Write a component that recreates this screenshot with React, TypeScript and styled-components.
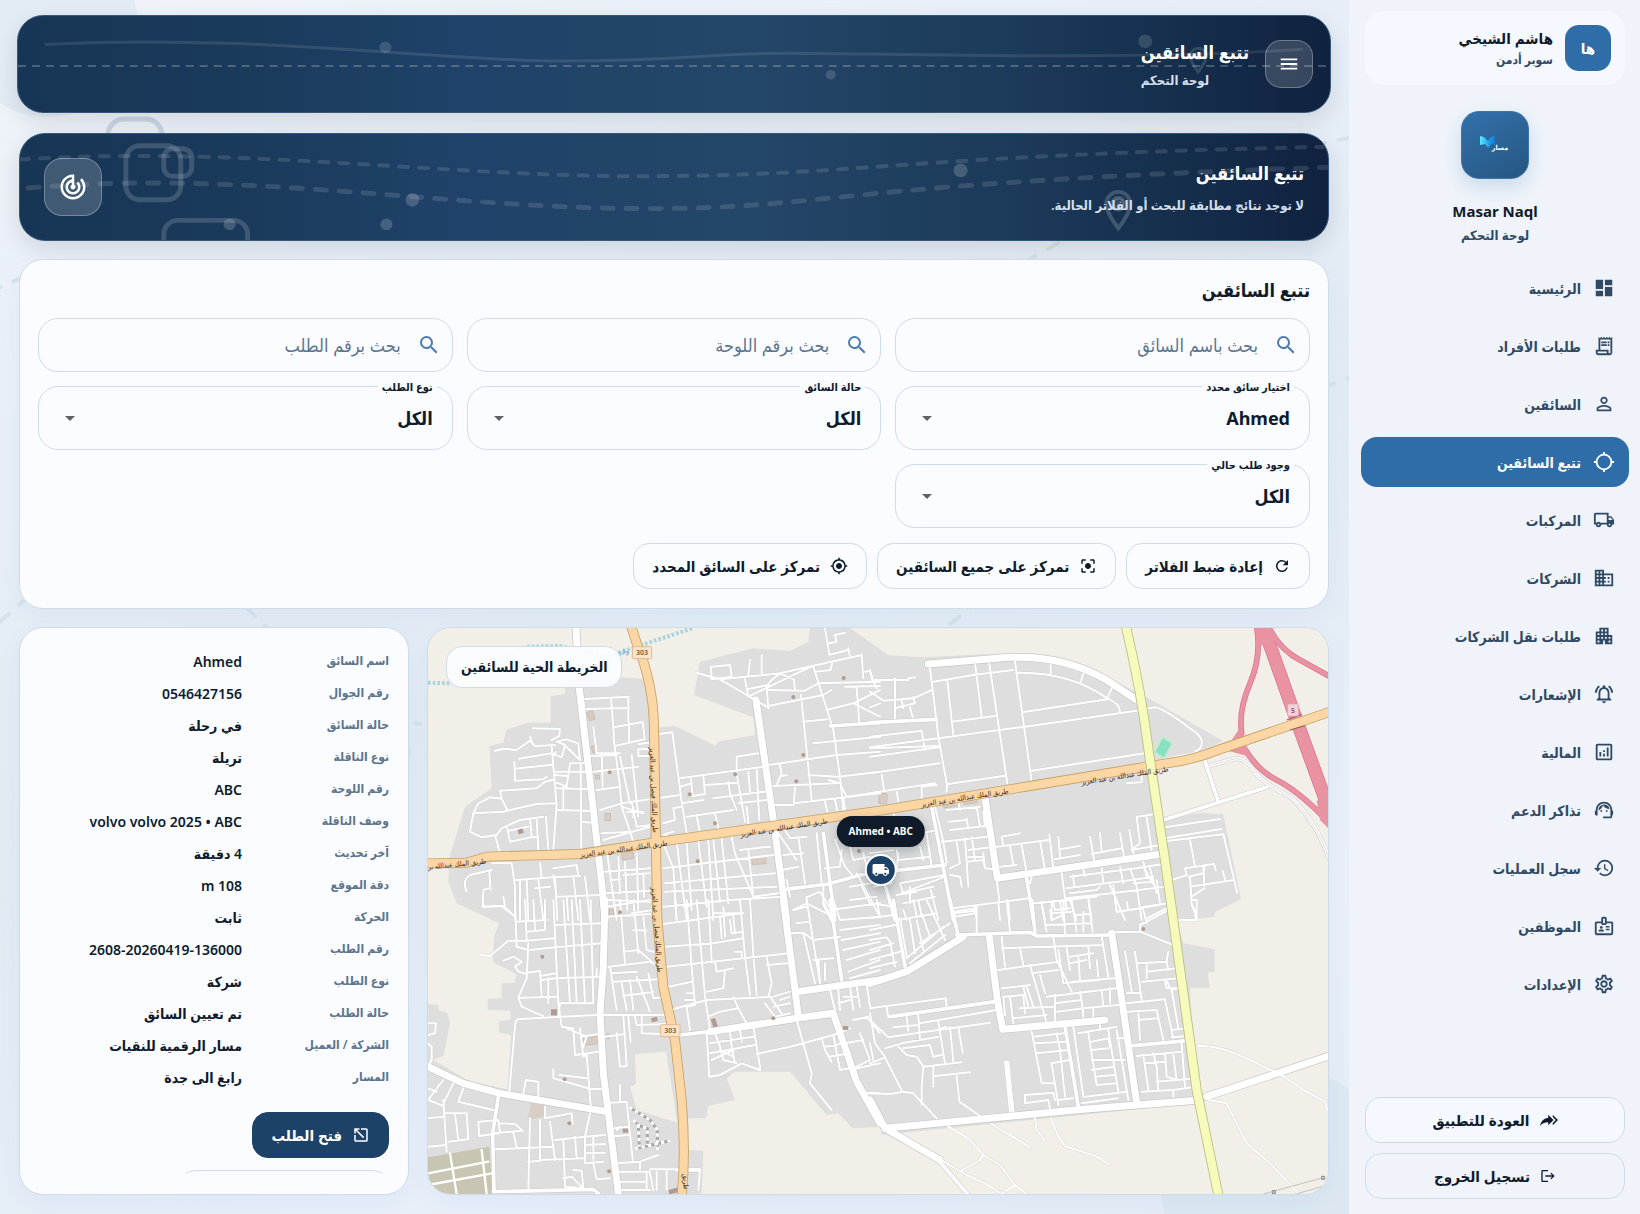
import React from 'react';
import styled, { createGlobalStyle, css } from 'styled-components';
import {
  MdApartment, MdArrowDropDown, MdBusiness, MdCenterFocusStrong, MdDashboard,
  MdGpsNotFixed, MdHistory, MdLocalShipping, MdLogout, MdMenu, MdMyLocation, MdOpenInNew,
  MdOutlineAnalytics, MdOutlineBadge, MdOutlineLocalShipping, MdOutlineNotificationsActive,
  MdOutlineReceiptLong, MdOutlineSettings, MdPersonOutline, MdRefresh, MdReplyAll, MdSearch,
  MdSupportAgent, MdTrackChanges,
} from 'react-icons/md';
import type { IconType } from 'react-icons';

const color = {
  ink: '#0f1b2d',
  nav: '#304a66',
  muted: '#5b7590',
  line: '#cfdbe9',
  blue: '#2f6da8',
  navy: '#1d4268',
  card: '#fbfcff',
  side: '#f0f4fa',
};

const GlobalStyle = createGlobalStyle`
  *, *::before, *::after { box-sizing: border-box; }
  body {
    margin: 0;
    font-family: "Noto Sans", "DejaVu Sans Condensed", "DejaVu Sans", sans-serif;
    color: ${color.ink};
    background: #e8eff7;
  }
  button, input, select { font: inherit; color: inherit; }
  h1, h2, p, dl, dd, ul { margin: 0; padding: 0; }
`;

/* ---------- shell ---------- */

const Shell = styled.div`
  display: grid;
  grid-template-columns: 291px minmax(0, 1fr);
  grid-template-rows: minmax(0, 1fr);
  height: 100vh;
`;

const Sidebar = styled.aside`
  display: flex;
  flex-direction: column;
  padding: 11px 11px 15px 12px;
  background: ${color.side};
`;

const Main = styled.main`
  position: relative;
  display: flex;
  flex-direction: column;
  gap: 18px;
  min-height: 0;
  padding: 15px 20px 19px 19px;
  background: linear-gradient(160deg, #f0f4f9 0%, #e9eff8 22%, #e1ebf4 52%, #e8eff9 80%, #e3ecf5 100%);
  overflow: hidden;
`;

const Backdrop = styled.svg`
  position: absolute;
  inset: 0;
  width: 100%;
  height: 100%;
`;

/* ---------- sidebar ---------- */

const UserCard = styled.div`
  display: flex;
  align-items: center;
  gap: 12px;
  margin: 0 4px;
  padding: 14px;
  border-radius: 20px;
  background: #f5f8fe;
`;

const Avatar = styled.div`
  display: grid;
  place-items: center;
  width: 46px;
  height: 46px;
  border-radius: 14px;
  background: ${color.blue};
  color: #fff;
  font-size: 15px;
  font-weight: 700;
`;

const UserName = styled.p`
  font-size: 15px;
  line-height: 24px;
  font-weight: 600;
`;

const UserRole = styled.p`
  font-size: 12px;
  line-height: 20px;
  font-weight: 600;
  color: ${color.nav};
`;

const Brand = styled.div`
  display: flex;
  flex-direction: column;
  align-items: center;
  padding: 26px 0 16px;
`;

const BrandMark = styled.div`
  display: grid;
  place-items: center;
  width: 68px;
  height: 68px;
  margin-bottom: 20px;
  border: 1px solid #3c75ab;
  border-radius: 18px;
  background: linear-gradient(150deg, #3371ab, #265681);
  box-shadow: 0 8px 20px rgba(47, 109, 168, 0.2);
`;

const BrandName = styled.p`
  font-size: 15px;
  line-height: 24px;
  font-weight: 700;
`;

const BrandSub = styled.p`
  font-size: 13px;
  line-height: 24px;
  font-weight: 600;
  color: ${color.nav};
`;

const NavList = styled.ul`
  display: flex;
  flex-direction: column;
  gap: 8px;
  list-style: none;
`;

const NavLink = styled.a<{ $active?: boolean }>`
  display: flex;
  align-items: center;
  gap: 12px;
  height: 50px;
  padding: 0 14px;
  border-radius: 16px;
  font-size: 14px;
  font-weight: 600;
  text-decoration: none;
  color: ${(p) => (p.$active ? '#fff' : color.nav)};
  background: ${(p) => (p.$active ? color.blue : 'transparent')};
  svg { width: 22px; height: 22px; }
`;

const SideActions = styled.div`
  display: flex;
  flex-direction: column;
  gap: 10px;
  margin: auto 4px 0;
`;

/* ---------- buttons ---------- */

const Button = styled.button<{ $primary?: boolean; $raised?: boolean }>`
  display: inline-flex;
  align-items: center;
  justify-content: center;
  gap: 10px;
  height: 46px;
  flex: none;
  padding: 0 18px;
  border: 1px solid ${color.line};
  border-radius: 16px;
  background: ${(p) => (p.$raised ? '#f5f8fe' : 'transparent')};
  font-size: 15px;
  font-weight: 700;
  white-space: nowrap;
  cursor: pointer;
  ${(p) => p.$primary && css`
    border-color: ${color.navy};
    background: ${color.navy};
    color: #fff;
  `}
`;

const Mirrored = styled.span`
  display: inline-flex;
  transform: scaleX(-1);
`;

/* ---------- banners ---------- */

const bannerSurface = css`
  position: relative;
  overflow: hidden;
  border: 1px solid #34577a;
  border-radius: 26px;
  background: linear-gradient(90deg, #173555 0%, #1b3b5c 18%, #20426a 34%, #244668 56%, #1c3a59 76%, #132b49 92%, #10223f 100%);
  color: #fff;
`;

const TopBar = styled.header`
  ${bannerSurface}
  flex: none;
  display: flex;
  align-items: center;
  gap: 16px;
  height: 98px;
  margin: 0 -2px 2px;
  padding: 0 17px;
  box-shadow: 0 8px 22px rgba(15, 27, 45, 0.12);
`;

const Hero = styled.section`
  ${bannerSurface}
  flex: none;
  display: flex;
  align-items: center;
  justify-content: space-between;
  height: 108px;
  padding: 0 24px;
  box-shadow: 0 8px 22px rgba(15, 27, 45, 0.12);
`;

const BannerArt = styled.svg`
  position: absolute;
  inset: 0;
  width: 100%;
  height: 100%;
  fill: none;
  stroke: #fff;
`;

const BannerText = styled.div<{ $end?: boolean }>`
  position: relative;
  text-align: ${(p) => (p.$end ? 'end' : 'start')};
`;

const BannerTitle = styled.h1`
  font-size: 18px;
  line-height: 32px;
  font-weight: 700;
`;

const BannerSub = styled.p<{ $spaced?: boolean }>`
  padding-top: ${(p) => (p.$spaced ? '4px' : '0')};
  font-size: 13px;
  line-height: 24px;
  font-weight: 600;
  color: #d3deeb;
`;

const GlassButton = styled.button`
  position: relative;
  display: grid;
  place-items: center;
  width: 48px;
  height: 48px;
  border: 1px solid rgba(255, 255, 255, 0.28);
  border-radius: 16px;
  background: rgba(255, 255, 255, 0.16);
  cursor: pointer;
`;

const GlassTile = styled.div`
  position: relative;
  display: grid;
  place-items: center;
  width: 58px;
  height: 58px;
  border: 1px solid rgba(255, 255, 255, 0.28);
  border-radius: 18px;
  background: rgba(255, 255, 255, 0.18);
`;

/* ---------- filters ---------- */

const Card = styled.section`
  position: relative;
  border: 1px solid ${color.line};
  border-radius: 24px;
  background: ${color.card};
  box-shadow: 0 8px 22px rgba(47, 109, 168, 0.05);
`;

const FilterCard = styled(Card)`
  flex: none;
  padding: 14px 18px 19px;
`;

const CardTitle = styled.h2`
  font-size: 18px;
  line-height: 32px;
  font-weight: 700;
`;

const FilterGrid = styled.div`
  display: grid;
  grid-template-columns: repeat(3, minmax(0, 1fr));
  gap: 14px;
  padding: 12px 0 15px;
`;

const SearchBox = styled.label`
  display: flex;
  align-items: center;
  gap: 16px;
  height: 54px;
  padding: 0 11px;
  border: 1px solid ${color.line};
  border-radius: 20px;
  color: #4a7bb0;
  svg { flex: none; }
`;

const SearchInput = styled.input`
  flex: 1;
  min-width: 0;
  padding: 0;
  border: 0;
  outline: 0;
  background: none;
  font-size: 18px;
  &::placeholder { color: ${color.muted}; opacity: 1; }
`;

const SelectBox = styled.div`
  position: relative;
  display: flex;
  align-items: center;
  height: 64px;
  border: 1px solid ${color.line};
  border-radius: 20px;
`;

const SelectLabel = styled.label`
  position: absolute;
  top: -10px;
  right: 15px;
  padding: 0 4px;
  background: ${color.card};
  font-size: 11px;
  line-height: 20px;
  font-weight: 700;
`;

const SelectInput = styled.select`
  width: 100%;
  height: 100%;
  padding: 0 19px;
  border: 0;
  outline: 0;
  background: none;
  appearance: none;
  font-size: 18px;
  font-weight: 700;
`;

const SelectArrow = styled(MdArrowDropDown)`
  position: absolute;
  left: 19px;
  color: #5f6368;
  pointer-events: none;
`;

const ButtonRow = styled.div`
  display: flex;
  flex-wrap: wrap;
  gap: 10px;
`;

/* ---------- lower row ---------- */

const Lower = styled.div`
  flex: 1;
  min-height: 0;
  display: grid;
  grid-template-columns: minmax(0, 902fr) minmax(0, 390fr);
  grid-template-rows: minmax(0, 1fr);
  gap: 18px;
`;

const MapCard = styled(Card)`
  overflow: hidden;
  background: #f2efe8;
`;

const MapCanvas = styled.svg`
  display: block;
  width: 100%;
  height: 100%;
`;

const MapChip = styled.h2`
  position: absolute;
  top: 18px;
  left: 18px;
  padding: 0 14px;
  border: 1px solid ${color.line};
  border-radius: 16px;
  background: rgba(251, 252, 255, 0.96);
  font-size: 14px;
  line-height: 40px;
  font-weight: 600;
`;

const Marker = styled.div`
  position: absolute;
  left: 50.3%;
  top: 33.2%;
  display: flex;
  flex-direction: column;
  align-items: center;
  gap: 7px;
  transform: translateX(-50%);
`;

const MarkerLabel = styled.span`
  padding: 0 12px;
  border-radius: 16px;
  background: #0f1b28;
  color: #fff;
  font-size: 10px;
  line-height: 31px;
  font-weight: 700;
  white-space: nowrap;
  box-shadow: 0 4px 12px rgba(15, 27, 45, 0.25);
`;

const MarkerPin = styled.span`
  display: grid;
  place-items: center;
  width: 32px;
  height: 32px;
  border: 2px solid #fff;
  border-radius: 50%;
  background: ${color.navy};
  color: #fff;
  box-shadow: 0 6px 12px rgba(15, 27, 45, 0.25);
`;

const DetailsCard = styled(Card)`
  display: flex;
  padding: 18px 19px 20px;
`;

const DetailsScroll = styled.div`
  flex: 1;
  min-width: 0;
  overflow: hidden;
`;

const DetailRow = styled.div`
  display: grid;
  grid-template-columns: 131px minmax(0, 1fr);
  gap: 16px;
  height: 32px;
  align-items: start;
`;

const DetailLabel = styled.dt`
  font-size: 12px;
  line-height: 30px;
  font-weight: 600;
  color: ${color.muted};
  white-space: nowrap;
`;

const DetailValue = styled.dd`
  font-size: 14px;
  line-height: 32px;
  font-weight: 600;
  white-space: nowrap;
`;

const DetailActions = styled.div`
  display: flex;
  flex-direction: column;
  align-items: flex-start;
  gap: 12px;
  padding-top: 18px;
`;

const WideButton = styled(Button)`
  min-width: 210px;
`;

/* ---------- data ---------- */

const navItems: { label: string; icon: IconType; active?: boolean }[] = [
  { label: 'الرئيسية', icon: MdDashboard },
  { label: 'طلبات الأفراد', icon: MdOutlineReceiptLong },
  { label: 'السائقين', icon: MdPersonOutline },
  { label: 'تتبع السائقين', icon: MdGpsNotFixed, active: true },
  { label: 'المركبات', icon: MdOutlineLocalShipping },
  { label: 'الشركات', icon: MdBusiness },
  { label: 'طلبات نقل الشركات', icon: MdApartment },
  { label: 'الإشعارات', icon: MdOutlineNotificationsActive },
  { label: 'المالية', icon: MdOutlineAnalytics },
  { label: 'تذاكر الدعم', icon: MdSupportAgent },
  { label: 'سجل العمليات', icon: MdHistory },
  { label: 'الموظفين', icon: MdOutlineBadge },
  { label: 'الإعدادات', icon: MdOutlineSettings },
];

const searches = ['بحث باسم السائق', 'بحث برقم اللوحة', 'بحث برقم الطلب'];

const selects = [
  { id: 'driver', label: 'اختيار سائق محدد', value: 'Ahmed' },
  { id: 'state', label: 'حالة السائق', value: 'الكل' },
  { id: 'kind', label: 'نوع الطلب', value: 'الكل' },
  { id: 'current', label: 'وجود طلب حالي', value: 'الكل' },
];

const details: [string, string][] = [
  ['اسم السائق', 'Ahmed'],
  ['رقم الجوال', '0546427156'],
  ['حالة السائق', 'في رحلة'],
  ['نوع الناقلة', 'تريلة'],
  ['رقم اللوحة', 'ABC'],
  ['وصف الناقلة', 'volvo volvo 2025 • ABC'],
  ['آخر تحديث', '4 دقيقة'],
  ['دقة الموقع', '108 m'],
  ['الحركة', 'ثابت'],
  ['رقم الطلب', '2608-20260419-136000'],
  ['نوع الطلب', 'شركة'],
  ['حالة الطلب', 'تم تعيين السائق'],
  ['الشركة / العميل', 'مسار الرقمية للنقيات'],
  ['المسار', 'رابغ الى جدة'],
];

/* ---------- map drawing: four quadrants share one road style ---------- */

type Quadrant = { x: number; y: number; minor: string; mid: string; major: string };

const quadrants: Quadrant[] = [
  {
    x: 0,
    y: 0,
    minor:
      'M495 237L625 230V305M490 267L627 264M573 234L582 350M582 322L668 306L674 358L584 378M627 308V366M580 350L600 500M655 388H705M655 388V408H700M655 372L690 368' +
      'M338 325L420 327L418 348L395 360M224 393L250 386L290 390L330 362L345 378L405 375M330 350L338 370M297 416L395 400L425 412L435 375L410 365L440 358L475 370L480 420L430 372M283 425L285 482L370 478L380 470M285 446L395 434M395 378L410 560M400 405L408 396M450 430H495M450 430L440 500L410 488M405 465L440 468M405 455H505' +
      'M240 512L350 505L375 485L405 478M240 512L245 536L210 532L175 550L160 580L150 635L185 652L230 645L245 625L300 600L370 590M160 580L250 575L350 552L410 550M245 536L262 570M262 625L270 665L335 652L330 595M265 632L325 620M350 595L355 690M378 590L385 690M410 550L400 690M225 645L240 700M410 505L515 508M410 570L518 573M430 500V568M482 430L484 690M484 605L520 608M330 652H355' +
      'M520 320L530 400L600 400M515 408L590 405M520 455L545 452L655 440M545 400L548 500M530 510L600 500M600 500L605 560L640 665M540 570L605 550L780 525M600 410L630 550M635 405L655 590M605 560L670 580M620 575H668M640 560V592M550 660L690 620M545 640L640 635M635 545L650 620L720 612' +
      'M718 342L757 337L785 545L800 640M780 475L1030 440M812 470L818 528L855 522L850 468M780 500L815 490M855 495L950 488M950 415V460L975 605M950 410L1015 400M985 455L990 515M1010 450L1018 600M785 550L850 540M880 535L1035 515M925 485L930 520L950 570M955 550L1040 540M730 610L765 600L760 565L785 560M800 590L940 570M830 585L840 640M885 580L895 625M980 560L985 610M730 645L760 635M740 640V650' +
      'M873 140L930 135L935 170L875 178ZM985 165L990 120M1025 105V160M828 158L900 178L1040 260M900 178L1080 160L1325 105L1330 175M975 178L985 230L1130 160L1175 140M985 207L1045 195M1045 210L1155 212L1195 190L1380 185M1045 265L1040 200Q1050 180 1080 160L1122 178L1125 212M1045 258L1210 225L1235 210M1180 140L1240 330L1260 470L1270 570M1185 155L1232 150L1237 125M1215 24L1228 104L1285 90M1228 70L1250 65L1245 45L1275 38M1285 85L1290 110M1220 270L1300 250L1380 210M1310 205L1318 310M1275 200L1380 198M1300 250L1380 290M1335 155L1350 152L1358 185M1150 305L1222 298M1143 225L1175 540M1045 435L1250 405L1380 395M1180 370L1380 350M1165 465L1255 470L1380 455M1060 498L1250 490M1080 435L1085 460L1070 495M1085 468L1100 466M1125 500L1122 550L1380 520M1225 480L1260 490L1280 530L1380 515M1215 545L1222 575M1245 540L1252 572M1270 535L1275 568M1120 555H1060M1210 640' +
      'M140 815Q125 780 150 765L215 750M208 755L212 810M190 810L205 805M190 815L188 860L250 858L285 890M250 830L255 860M215 728L275 730L285 800V900M288 780L400 772L480 768M300 778V900M320 776L325 900M355 780L370 900M345 805L390 800M400 765L410 830L545 825M360 728L365 772M400 745L470 735L475 768M440 830L445 900M460 770L475 900M495 770L510 900M405 770L412 900' +
      'M560 690L580 830L590 900M575 780L600 778M595 710L600 820M615 725L622 870M560 820L690 812M555 755L690 745M610 765L690 760M650 700L655 870M670 760L672 830M635 880L700 870M560 840L690 845' +
      'M730 670L760 745L770 900M730 745L1060 705M735 790L1065 760M735 815L1070 800M730 860L930 840L1090 830M770 665L780 745L800 900M800 670L815 870M835 665L860 860M865 660L880 900M880 660L900 845M905 655L925 850M935 650L945 700L1000 830M960 690L1050 680M985 690L1000 830L1075 820M735 650L800 660M1095 630L1110 655L1160 650M1075 640L1130 720M1090 705L1150 700M1135 650L1155 790M1190 640L1205 790M1085 750L1135 740M1100 780L1110 830' +
      'M1120 870L1160 850L1220 880M1165 830L1200 815L1240 880M1160 830V850M1230 870L1380 850M1245 660L1275 740L1300 770M1215 745L1260 740L1265 690M1310 760L1380 890M1290 800L1380 785M1290 840L1370 830M1325 800L1350 850M1290 680L1300 720L1350 710M1330 700L1340 740M1210 800V850',
    mid: 'M480 205L490 260M1230 318L1380 308M1095 808L1225 792L1320 765L1380 760M1210 640L1245 900M1210 850L1235 900',
    major: 'M468 24L478 205L545 790L555 900M1008 240L1060 600L1100 900',
  },
  {
    x: 1350,
    y: 0,
    minor:
      'M180 145L205 350L232 500M190 185L310 165L430 150M316 135L335 290M358 132L412 490M435 125L485 485M232 182L250 345M245 305L375 288M0 382L205 355L465 320L800 272L855 262M438 158Q600 155 712 235Q750 250 750 275M457 277L712 238M542 135V165M640 162L630 190M725 205L712 235M485 452L825 400M230 493L405 467M0 350L155 332L165 390M0 385L205 378M0 410L210 382M0 460L210 430M35 465L42 510M0 520L195 490M80 515L85 545M155 500V540M115 175L135 172M75 175V295M15 180H115M0 215L40 242L130 235L185 210M0 150L10 185L20 205M0 262L30 250M75 265L135 250M95 240L100 265M120 262L128 292M130 230L135 250M155 500L200 495M230 515V500' +
      'M855 262Q880 265 960 325Q1010 355 990 385L970 400L880 418M880 600L1185 500M770 490L815 487V465M885 622L1050 597M885 655L1055 627M890 663L1060 643L1102 820M960 660L975 740M905 780L950 765L945 745L1032 732L1038 752M955 770L1000 760L1005 735M960 800L1090 780M1058 752L1065 778M960 770L965 850L980 900M1000 740L1003 798M965 830L1003 805M980 840H965' +
      'M195 560L220 665L230 730M230 570L330 560M235 605L290 600M240 630L345 618M265 545L270 570M290 595L295 625M320 560L330 620M340 575L345 620M215 665L350 650M260 665L270 730L240 745M285 655L295 800M305 650L315 720M240 765L270 770L275 800M290 725L340 720L345 745L370 748M295 690L375 680M295 712L340 710M340 700L345 745' +
      'M380 680L535 660M395 650L450 640M395 655L400 675M420 678L430 735M455 675L470 760M510 662L525 750M538 645L550 745M390 740L440 735M565 650L570 710M570 688L630 677M555 718L630 705M660 650L672 720M690 640L695 695M665 702L755 685M750 640L762 710M778 630L790 700M800 590L810 670L785 690M830 592L845 690M802 590L852 583M785 690L870 675' +
      'M480 790L485 770M575 760L590 870M600 770L800 745L880 732M590 805L785 780M610 765L612 800M640 750L645 768M695 745L700 790M600 820L680 810L690 800M585 835L680 825L885 800M730 795L740 875L820 865M750 740L760 790M780 745L800 800L815 900M785 780L850 770M820 725L830 770M790 790L850 785M820 740L855 800M840 745L860 820M860 780L870 850M495 850L680 830M515 850L525 900M550 850L555 870L600 865M570 845L580 900M600 840L620 900M655 830L665 900M540 870L545 900M820 860L895 850M830 895L895 862M720 795L765 900' +
      'M380 780L388 840M250 865L475 835M385 845L390 900M415 845L420 900M315 860L320 900M255 880L315 872M80 690L85 720L180 710M90 790L225 765M90 790L100 820L190 800M95 820L225 770M100 850L195 830M145 840L155 890M120 850V800M180 800L205 900M80 750L85 700M150 680L160 720M170 640L185 740M0 700L70 690M10 800L65 790M0 850L75 860M80 825L140 815M100 870L110 900M70 575L72 590M155 640L190 632',
    mid: 'M0 308L200 298M1005 425L1045 545M880 600L1190 502M185 560L250 900M0 760L225 735M30 740L75 900M1015 438L1080 420Q1120 405 1145 445T1260 530Q1330 590 1380 720M470 775L490 900',
    major: 'M175 132L420 112Q580 105 710 180L800 240M345 535L382 775L875 702',
  },
  {
    x: 0,
    y: 840,
    minor:
      'M188 0L190 20L245 18L280 45M285 0L290 140L325 150M315 0L320 120M340 0L345 90M375 0V90L320 95M288 65L380 60M265 122L320 122L405 115M180 165L210 168L265 122M250 182L280 170L305 185L285 200L295 215L320 222M325 130L320 235L295 293L305 320L345 338L370 348M400 0L415 310L425 380L460 385L465 465L535 455M320 218L360 213L365 290M365 240L410 235M385 235V310M300 293L410 290M360 228L410 220M330 150L405 142L545 130M405 75L545 70M430 0L450 310M455 0L470 310M480 0L495 310M512 0L520 310M420 310H520M415 235L540 230M530 205V230M415 348L420 310M440 385L500 410L490 440' +
      'M295 358L420 350L535 345M295 358Q285 360 285 380L268 572M485 410L535 402M480 385L490 470L500 465L512 615M470 465L535 455M400 508V535L505 565M418 525L500 535M505 567H545M310 580L318 540L355 545V590M24 370H48L45 400L24 405M24 430L35 440V480L24 500M100 550L70 610M70 540L24 600M24 565L50 575M130 565L115 605L220 630M24 600L70 618M70 600L80 755M72 640L140 640L145 718L85 725M105 640L115 720M24 655L70 650M24 740L80 735M175 665L235 660L240 700L178 708ZM235 670L285 672L308 692L220 700M280 698L290 740M360 660V780M330 655L325 870M375 620V655L455 640L458 672M360 780L490 775M325 785L360 782M225 748L400 740M390 665L405 780M405 720L495 710L555 705M430 720L435 860M510 640L495 710V790L550 785M465 710L470 775M430 835L455 830L490 865M460 810L485 812L490 865M435 860L490 865M520 790L530 838L570 835M495 735L555 732M495 760L555 758M520 710V780' +
      'M560 20L690 0M560 50L690 42M600 0L615 190M640 0L655 160M565 200L655 190L690 185L720 200M575 220L650 215M580 245L720 238M570 200L590 330M605 250L620 330M630 240L640 330M650 230L690 335M685 220L700 295L740 290M610 288L700 275M610 155L655 150L695 185M640 90L680 92M670 50L680 150L700 155M545 345L740 345M555 410L615 402M590 400L600 500L620 498L610 345M625 350L632 425M645 350L650 375L740 372M665 345V400L720 402M570 608L620 605L638 780M585 685L625 680M585 708L630 705M600 555V605M585 790L660 785L715 765M660 785V808M590 815H690M600 845H680M605 870H690M680 815V870M590 690L600 680' +
      'M730 72L970 40M735 140L880 130L970 115M740 200L1035 168L1105 160M765 0L770 60M800 0L815 200L825 315L800 320M830 0L855 290L870 390M865 0L875 180M790 20L815 15M745 260L815 245M800 280H820M795 300H825M750 330L860 300L1060 290M800 320L810 390M960 0L975 170L990 285M990 0L1000 165L1010 285M900 50L905 115M880 40H960M940 50L945 100M930 60L935 100L970 95M945 155H965V170M910 20L915 110M1040 170L1055 250L1045 290M1040 195L1105 190M885 185L890 215L940 205M860 275L910 265L915 210M865 350L900 335L955 325L985 380M940 290L955 325M1000 380L1020 500L1020 510L965 490L900 525L868 530L860 400M870 430L1000 410M870 460L1005 435M885 400L900 440L910 480L950 490M930 395L935 440L945 490M900 450L940 470M960 390L965 425M875 480L940 450M1010 462L1110 440L1240 405M1130 360L1175 520L1170 550L1235 630M1035 310L1065 350L1110 340M1050 290L1085 340M1080 300L1110 290M1060 320L1110 310M1110 275L1060 290' +
      'M1130 70L1165 65M1115 100L1150 98L1180 120L1260 110M1160 0L1200 250M1120 30L1160 20M1180 180L1240 175M1215 190V240M1195 180L1200 250M1150 100L1185 250M1240 0L1260 60L1380 50M1260 90L1380 75M1265 120L1380 100M1270 150L1380 125M1280 180L1380 150M1285 215L1380 180M1290 235L1380 210M1230 270L1245 330M1255 270L1260 330M1290 260L1300 330M1310 260L1320 320M1340 250L1350 320M1255 310L1290 300M1270 290L1310 290M1240 405L1290 385M1205 415L1215 450L1235 485M1240 405L1260 510L1310 500M1215 440L1330 420M1225 470L1290 460M1320 400L1350 480L1310 500M1340 350L1380 400M1300 360L1345 350M1290 510L1380 490M1340 580H1380M690 820L700 870M710 815V870M740 810V870M690 808H840L835 870',
    mid: 'M235 590L218 700L222 870M220 875L520 868L535 880M780 405L870 395M1230 0L1265 240M770 810H840',
    major: 'M555 0L550 200L540 340L550 520L565 640L595 880M24 500L130 550L240 580L560 635M1090 0L1125 270L1135 350M1130 275L1380 240M870 395L1130 355L1240 340L1310 545L1380 670',
  },
  {
    x: 1350,
    y: 840,
    minor:
      'M0 55L70 45M0 90L75 75M0 120L50 112L60 125L75 200M0 150L70 130M0 180L90 155M0 205L80 185M85 60L200 40M90 55L110 170M120 60L135 160M140 60L160 150M155 40L180 110M170 0L225 120M110 175L220 80M120 190L225 105M150 130L240 70M20 0L30 50M130 0L140 50M250 35L320 25M320 20V100M410 0L420 95M255 50L315 40M490 10L605 0M515 10L530 95M545 10V60L580 45M580 0L585 100M605 0L620 95M550 40L605 35M525 75L665 70M640 35V95M655 0L668 95M615 45L660 42M735 0L740 35L870 15M820 30L830 70M770 5L775 30M810 95V75L895 30M725 97L810 95L910 135' +
      'M395 110L405 200M395 145L700 135M450 145L460 195M385 210L565 185M550 110L560 180L605 275M480 195L530 370M395 265L480 255M485 220L565 210M510 225L525 280M565 150L580 250L690 240M590 145L600 210M600 170L670 160M600 190L650 180M625 170L630 240M655 140L660 205M680 180L685 230M695 110L715 230M605 245L735 235M530 290L740 265M555 285V360M555 310L635 300L640 350M630 275L640 340M695 270L700 320M720 265V310M640 325L745 315M450 325L550 320M400 290L460 285L465 340M420 290L430 370M460 260L475 320M470 260L490 320M430 355L530 345M560 335L640 325M670 325V350M400 290L405 345' +
      'M765 155L785 275M795 155L815 300M805 190L890 185L895 155M830 190V235M830 215L920 205M815 245L925 235M890 185L895 210M770 280L810 278M770 310L885 298M885 240L890 265L925 265M885 300L910 415M770 335L860 330M805 335L810 420M860 330L880 420M905 270L925 385M890 240L900 265M805 360L865 355M905 390L950 385M905 412L955 408M935 430L945 560M800 468L935 455M820 465L835 570M850 460L860 500L865 570M885 460L890 530L920 540L910 465M825 490L885 485M860 545L980 535M815 575L910 570L975 560M910 570V590M905 270L925 265' +
      'M485 395L515 550H550M490 410L580 400M495 430L585 425M500 460L595 450M545 490L600 480M545 490L565 615M560 400L570 450L585 590M465 585L550 578L555 600M465 585V610L535 600L540 625M565 600L610 595M610 380L640 590M625 400L740 380M655 400L680 555M665 425L715 415L720 440M665 450L715 445M665 510L730 500M675 530L735 525M680 555L740 550M690 375V390M715 390L745 575M740 390L775 600M645 590L770 575M665 480H765M740 415H760M635 610L745 595' +
      'M0 325L228 295L230 325M50 320L55 352L375 305M145 345L150 420M70 382L145 375M110 350L115 392M150 370L380 330M0 360L55 412L205 390L360 368M205 365L225 490M240 380L250 485M265 382L278 458M215 385L230 380M45 445L95 430L205 410M85 440L110 465L140 470L160 500L155 560V615M100 445L180 435L190 470L215 465M160 500L275 487M190 500V560M195 528L300 517M260 528L268 605L330 648M0 490L45 472L97 575M0 340L10 400L15 430L45 470M0 430L10 480M0 580L60 582L100 575L130 580L200 655M405 485H415L430 635M405 485L420 635' +
      'M235 680L295 715L340 765L330 780L275 812M340 765L390 795L435 855L395 882M435 855L470 882M365 672L480 742M495 655L500 690L525 722M543 655L565 710L585 738L680 770L718 793M205 775L290 825L345 850L395 882M985 438Q1050 435 1130 475L1240 528L1300 570L1365 605L1372 630M1015 600L1070 610L1090 650L1130 730L1200 790L1285 880M900 60H980V40L965 15M980 0V40',
    mid: 'M240 0L265 110M70 0L105 200M485 0L495 100M260 105L480 97L500 108L720 105M790 437L955 422M585 380L625 620M205 780L295 885M410 490L428 630M60 350L375 305',
    major: 'M0 250L110 215L280 110M358 110L382 300L398 388L705 360M725 100L760 330L800 610M0 600L45 685L210 780M45 685L640 628L990 600M1010 590L1380 467',
  },
];

const urban =
  'M435 170V222L392 228V308H325L258 330L250 368L208 378L215 505L135 560L90 705L85 785L110 850L237 910L222 950L218 1025L288 1062L285 1088L245 1090V1135L203 1137V1170L272 1172V1200L237 1202V1238L273 1245L262 1408L150 1385L40 1320L70 1308L90 1210L82 1178L55 1170V1155L24 1152V1722H845L850 1592L805 1590V1495H858L865 1458L945 1440L920 1375L945 1355H1110L1220 1485L1255 1480L1298 1525L1380 1520L1385 1545L2330 1450L2310 1103H2370L2363 1057L2384 1055V988L2290 970L2270 900L2345 895L2383 890L2385 875L2463 838L2410 582L2335 580L2230 600L2210 430L2330 410L2408 362L2180 232L2050 165L1910 115L1780 98L1510 112L1405 106L1290 24H1170L1165 65L1110 93L1000 85L840 125L822 225L1000 292L1005 345L893 365L888 378L765 318L715 322L700 180L595 170Z';

const buildings: [number, number, number, number, number][] = [
  [500, 278, 18, 26, -20], [513, 380, 10, 20, -20], [555, 580, 16, 22, 0], [605, 700, 34, 20, -8],
  [995, 712, 42, 22, -4], [1378, 520, 24, 30, 4], [1570, 548, 44, 16, -8], [1630, 540, 40, 14, -8],
  [487, 1255, 46, 22, -8], [526, 465, 12, 12, 0], [568, 868, 12, 18, 0], [560, 1242, 8, 14, 0],
];

const landmarks: [number, number][] = [
  [1271, 174], [1120, 231], [1150, 405], [946, 463], [1129, 484], [809, 523], [885, 610], [1317, 693],
  [833, 724], [569, 457], [367, 1010], [600, 877], [434, 1378], [448, 1510], [1060, 1195], [567, 1654], [2170, 927],
];

const blocks: [number, number, number, number, number][] = [
  [292, 630, 16, 14, -20], [393, 1168, 18, 18, 0], [693, 1195, 18, 12, -15], [872, 1198, 14, 26, -18],
  [1269, 1218, 16, 12, 0], [608, 1526, 16, 12, 0], [745, 1710, 28, 14, -15],
];

const HORIZONTAL_ROAD = 'طريق الملك عبدالله بن عبد العزيز';
const VERTICAL_ROAD = 'طريق الملك فيصل بن عبد العزيز';

const roadLabels = [
  { x: 612, y: 694, r: -8, text: HORIZONTAL_ROAD },
  { x: 1093, y: 630, r: -9, text: HORIZONTAL_ROAD },
  { x: 1635, y: 540, r: -9, text: HORIZONTAL_ROAD },
  { x: 2115, y: 474, r: -9, text: HORIZONTAL_ROAD },
  { x: 68, y: 744, r: -6, text: HORIZONTAL_ROAD },
  { x: 694, y: 510, r: 88, text: VERTICAL_ROAD },
  { x: 704, y: 930, r: 86, text: VERTICAL_ROAD },
];

function StreetMap() {
  return (
    <MapCanvas viewBox="24 24 2700 1698" preserveAspectRatio="xMidYMid slice" aria-hidden="true">
      <rect x="0" y="0" width="2760" height="1760" fill="#f2efe8" />
      <path d={urban} fill="#dedede" />
      <path d="M645 1303L738 1295L772 1508L650 1470L630 1400L648 1392Z" fill="#f2efe8" />
      <path d="M24 1612L208 1580L218 1722H24Z" fill="#c8c6b2" />
      <path d="M333 1448L378 1455L370 1490L322 1500Z" fill="#d8cec6" />
      <path d="M24 188L90 190L180 150L320 80L420 78L560 110L680 70L820 24" fill="none" stroke="#a9d5df" strokeWidth="12" strokeDasharray="8 6" />
      {buildings.map(([x, y, w, h, r]) => (
        <rect key={`${x}-${y}`} x={x} y={y} width={w} height={h} fill="#d8cbc2" stroke="#c4b3a7" strokeWidth="2" transform={`rotate(${r} ${x} ${y})`} />
      ))}
      <g fill="none" strokeLinecap="round" strokeLinejoin="round">
        {quadrants.map((q) => (
          <g key={`casing-${q.x}-${q.y}`} transform={`translate(${q.x} ${q.y})`} stroke="#c6c6c6">
            <path d={q.minor} strokeWidth="8" stroke="#d0d0d0" />
            <path d={q.mid} strokeWidth="14" />
            <path d={q.major} strokeWidth="25" />
          </g>
        ))}
        {quadrants.map((q) => (
          <g key={`road-${q.x}-${q.y}`} transform={`translate(${q.x} ${q.y})`} stroke="#fff">
            <path d={q.minor} strokeWidth="6" />
            <path d={q.mid} strokeWidth="11" />
            <path d={q.major} strokeWidth="21" />
          </g>
        ))}
        <path d="M24 1660L205 1625M24 1695L215 1660M90 1600L110 1722M185 1590L200 1722" stroke="#fff" strokeWidth="7" />
        <path d="M2365 438L2430 420Q2470 405 2495 445T2610 530Q2680 590 2730 720" stroke="#c6c6c6" strokeWidth="2" />
        <path d="M628 1462L690 1500L712 1530V1590M640 1500L655 1515L658 1580M650 1515L682 1525V1575M645 1586L750 1562" stroke="#a9a9a9" strokeWidth="9" strokeLinecap="butt" />
        <path d="M628 1462L690 1500L712 1530V1590M640 1500L655 1515L658 1580M650 1515L682 1525V1575M645 1586L750 1562" stroke="#fff" strokeWidth="9" strokeDasharray="10 10" strokeLinecap="butt" />
      </g>
      <g fill="#b09c90">
        {landmarks.map(([x, y]) => <circle key={`${x}-${y}`} cx={x} cy={y} r="6" />)}
        {blocks.map(([x, y, w, h, r]) => (
          <rect key={`${x}-${y}`} x={x} y={y} width={w} height={h} transform={`rotate(${r} ${x} ${y})`} />
        ))}
      </g>
      <g fill="none" strokeLinejoin="round">
        <g stroke="#dc6c8c">
          <path d="M2510 20Q2525 110 2490 190T2465 340L2430 385" strokeWidth="17" />
          <path d="M2545 20Q2580 90 2640 120L2740 175" strokeWidth="17" />
          <path d="M2430 385L2470 380Q2510 450 2570 480T2710 590" strokeWidth="17" />
          <path d="M2530 20L2640 330L2760 660" strokeWidth="40" />
        </g>
        <g stroke="#e892a2">
          <path d="M2510 20Q2525 110 2490 190T2465 340L2430 385" strokeWidth="13" />
          <path d="M2545 20Q2580 90 2640 120L2740 175" strokeWidth="13" />
          <path d="M2430 385L2470 380Q2510 450 2570 480T2710 590" strokeWidth="13" />
          <path d="M2530 20L2640 330L2760 660" strokeWidth="36" />
        </g>
        <path d="M2502 24H2550L2560 80L2520 75Z" fill="#e892a2" />
        <path d="M2462 320L2415 390L2490 410Z" fill="#e892a2" />
        <path d="M2690 540L2700 600L2740 640V560Z" fill="#e892a2" />
        <g stroke="#c3a165" strokeWidth="30">
          <path d="M634 20L650 70Q700 190 702 320L708 690L712 900L730 1100L765 1260L785 1440Q798 1600 785 1730" />
          <path d="M0 731L140 728L200 710L480 702L700 668L1380 572L1830 498L2240 430Q2320 420 2400 388L2740 272" />
        </g>
        <g stroke="#fcd6a4" strokeWidth="25">
          <path d="M634 20L650 70Q700 190 702 320L708 690L712 900L730 1100L765 1260L785 1440Q798 1600 785 1730" />
          <path d="M0 731L140 728L200 710L480 702L700 668L1380 572L1830 498L2240 430Q2320 420 2400 388L2740 272" />
        </g>
        <path d="M2118 20Q2165 220 2187 400L2235 720L2330 1410L2396 1730" stroke="#b8bd80" strokeWidth="30" />
        <path d="M2118 20Q2165 220 2187 400L2235 720L2330 1410L2396 1730" stroke="#f6fabb" strokeWidth="25" />
        <path d="M2600 300L2645 283M2610 330L2655 317" stroke="#8c5a55" strokeWidth="3" />
        <path d="M2530 1722L2710 1673M2600 1730L2740 1690" stroke="#aaa" strokeWidth="2" />
        <path d="M2557 1712h9v9h-9zM2705 1669h9v9h-9z" stroke="#888" strokeWidth="3" fill="#ccc" />
      </g>
      <path d="M2228 352L2256 370L2232 414L2205 396Z" fill="#88e0be" stroke="#aef0c8" strokeWidth="4" />
      <g fontFamily='"Noto Sans", "DejaVu Sans Condensed", "DejaVu Sans", sans-serif' textAnchor="middle">
        <g fill="#3a2c1e" fontSize="21">
          {roadLabels.map((l) => (
            <text key={`${l.x}-${l.y}`} x={l.x} y={l.y} transform={`rotate(${l.r} ${l.x} ${l.y})`}>{l.text}</text>
          ))}
          <text x="790" y="1685" transform="rotate(88 790 1685)">طريق</text>
        </g>
        <text x="590" y="108" fontSize="22" fill="#5b93c8" transform="rotate(-14 590 108)">وادي رابغ</text>
        <g fontSize="21" fontWeight="600">
          <g fill="#f8e4cc" stroke="#e0b98a" strokeWidth="3">
            <rect x="637" y="80" width="58" height="36" rx="3" />
            <rect x="722" y="1214" width="58" height="36" rx="3" />
          </g>
          <rect x="2603" y="252" width="32" height="36" rx="3" fill="#f3d3da" stroke="#e3a5b3" strokeWidth="2" />
          <text x="666" y="106" fill="#7c5c34">303</text>
          <text x="751" y="1240" fill="#7c5c34">303</text>
          <text x="2619" y="278" fill="#9c3f5c">5</text>
        </g>
      </g>
    </MapCanvas>
  );
}

/* ---------- decorative art ---------- */

function PageArt() {
  return (
    <Backdrop viewBox="0 0 1349 1214" preserveAspectRatio="none" aria-hidden="true" fill="none">
      <circle cx="48" cy="27" r="90" fill="#dde8f2" fillOpacity="0.7" />
      <circle cx="1276" cy="1180" r="116" fill="#d9e6ef" fillOpacity="0.7" />
      <rect x="108" y="119" width="54" height="56" rx="16" stroke="#c9d6e4" strokeWidth="5" />
      <g stroke="#d6e1ec" strokeWidth="4" strokeLinecap="round" strokeDasharray="12 14">
        <path d="M-10 292Q20 278 60 262M1025 262Q1180 170 1349 138M930 640Q1180 440 1349 378M0 622Q140 490 240 600T420 724" />
      </g>
      <circle cx="404" cy="752" r="7" fill="#d3dfeb" />
    </Backdrop>
  );
}

function TopBarArt() {
  return (
    <BannerArt viewBox="0 0 1314 98" preserveAspectRatio="none" aria-hidden="true">
      <path d="M27 29C240 18 420 46 543 46S690 38 770 38S1110 46 1287 34" strokeOpacity="0.1" strokeWidth="3" />
      <path d="M0 51H1314" strokeOpacity="0.22" strokeWidth="2" strokeDasharray="8 6" />
      <g fill="#fff" fillOpacity="0.14" stroke="none">
        <circle cx="368" cy="32" r="6" />
        <circle cx="814" cy="60" r="5" />
        <circle cx="1129" cy="26" r="7" />
      </g>
      <g strokeOpacity="0.14" strokeWidth="3">
        <path d="M1182 57Q1174 46 1174 41A8 8 0 0 1 1190 41Q1190 46 1182 57Z" />
        <circle cx="1182" cy="41" r="3" />
      </g>
    </BannerArt>
  );
}

function HeroArt() {
  return (
    <BannerArt viewBox="0 0 1310 108" preserveAspectRatio="none" aria-hidden="true">
      <g strokeLinecap="round" strokeOpacity="0.12">
        <path d="M0 26C220 12 420 43 620 43C840 43 880 22 1310 13" strokeWidth="4" strokeDasharray="9 11" />
        <path d="M8 55C230 36 420 76 630 76C810 76 820 50 1310 34" strokeWidth="5" strokeDasharray="11 13" />
      </g>
      <g strokeOpacity="0.16" strokeWidth="5">
        <rect x="106" y="12" width="55" height="55" rx="14" />
        <rect x="144" y="15" width="28" height="28" rx="9" />
        <rect x="144" y="88" width="84" height="60" rx="14" />
      </g>
      <g fill="#fff" fillOpacity="0.18" stroke="none">
        <circle cx="393" cy="67" r="7" />
        <circle cx="367" cy="92" r="6" />
        <circle cx="210" cy="92" r="6" />
        <circle cx="942" cy="37" r="7" />
      </g>
      <g strokeOpacity="0.18" strokeWidth="4">
        <path d="M1100 96Q1088 80 1088 71A12 12 0 0 1 1112 71Q1112 80 1100 96Z" />
        <circle cx="1100" cy="71" r="6" fill="#fff" fillOpacity="0.12" />
      </g>
    </BannerArt>
  );
}

function Logo() {
  return (
    <svg width="30" height="20" viewBox="0 0 30 20" role="img" aria-label="مسار">
      <defs>
        <linearGradient id="mark" x1="0" y1="0" x2="1" y2="0">
          <stop offset="0" stopColor="#5ce8fb" />
          <stop offset="0.6" stopColor="#1a9fee" />
          <stop offset="1" stopColor="#1676d8" />
        </linearGradient>
      </defs>
      <path d="M0 1L4 2L8 6L11 2L15 1V10L12 8L8 13L5 9L0 10Z" fill="url(#mark)" />
      <text x="20" y="15" fontSize="7" fontWeight="700" textAnchor="middle" fill="#fff">مسار</text>
    </svg>
  );
}

/* ---------- page ---------- */

export default function App() {
  return (
    <Shell dir="rtl" lang="ar">
      <GlobalStyle />
      <Sidebar>
        <UserCard>
          <Avatar>ها</Avatar>
          <div>
            <UserName>هاشم الشيخي</UserName>
            <UserRole>سوبر أدمن</UserRole>
          </div>
        </UserCard>
        <Brand>
          <BrandMark><Logo /></BrandMark>
          <BrandName>Masar Naql</BrandName>
          <BrandSub>لوحة التحكم</BrandSub>
        </Brand>
        <nav>
          <NavList>
            {navItems.map(({ label, icon: Icon, active }) => (
              <li key={label}>
                <NavLink href="#" $active={active} aria-current={active ? 'page' : undefined}>
                  <Icon />
                  {label}
                </NavLink>
              </li>
            ))}
          </NavList>
        </nav>
        <SideActions>
          <Button type="button" $raised><Mirrored><MdReplyAll size={18} /></Mirrored>العودة للتطبيق</Button>
          <Button type="button"><MdLogout size={16} />تسجيل الخروج</Button>
        </SideActions>
      </Sidebar>

      <Main>
        <PageArt />
        <TopBar>
          <TopBarArt />
          <GlassButton type="button" aria-label="القائمة"><MdMenu size={22} color="#fff" /></GlassButton>
          <BannerText $end>
            <BannerTitle>تتبع السائقين</BannerTitle>
            <BannerSub>لوحة التحكم</BannerSub>
          </BannerText>
        </TopBar>

        <Hero>
          <HeroArt />
          <BannerText>
            <BannerTitle as="h2">تتبع السائقين</BannerTitle>
            <BannerSub $spaced>لا توجد نتائج مطابقة للبحث أو الفلاتر الحالية.</BannerSub>
          </BannerText>
          <GlassTile><MdTrackChanges size={30} color="#fff" /></GlassTile>
        </Hero>

        <FilterCard>
          <CardTitle>تتبع السائقين</CardTitle>
          <FilterGrid>
            {searches.map((placeholder) => (
              <SearchBox key={placeholder}>
                <MdSearch size={24} />
                <SearchInput type="text" placeholder={placeholder} aria-label={placeholder} />
              </SearchBox>
            ))}
            {selects.map((s) => (
              <SelectBox key={s.id}>
                <SelectLabel htmlFor={s.id}>{s.label}</SelectLabel>
                <SelectInput id={s.id} defaultValue={s.value}>
                  <option value={s.value}>{s.value}</option>
                </SelectInput>
                <SelectArrow size={24} />
              </SelectBox>
            ))}
          </FilterGrid>
          <ButtonRow>
            <Button type="button"><MdRefresh size={18} />إعادة ضبط الفلاتر</Button>
            <Button type="button"><MdCenterFocusStrong size={18} />تمركز على جميع السائقين</Button>
            <Button type="button"><MdMyLocation size={18} />تمركز على السائق المحدد</Button>
          </ButtonRow>
        </FilterCard>

        <Lower>
          <MapCard>
            <StreetMap />
            <MapChip>الخريطة الحية للسائقين</MapChip>
            <Marker dir="ltr">
              <MarkerLabel>Ahmed • ABC</MarkerLabel>
              <MarkerPin><MdLocalShipping size={18} /></MarkerPin>
            </Marker>
          </MapCard>
          <DetailsCard>
            <DetailsScroll>
              <dl>
                {details.map(([label, value]) => (
                  <DetailRow key={label}>
                    <DetailLabel>{label}</DetailLabel>
                    <DetailValue>{value}</DetailValue>
                  </DetailRow>
                ))}
              </dl>
              <DetailActions>
                <Button type="button" $primary><Mirrored><MdOpenInNew size={18} /></Mirrored>فتح الطلب</Button>
                <WideButton type="button" aria-label="تفاصيل السائق" />
              </DetailActions>
            </DetailsScroll>
          </DetailsCard>
        </Lower>
      </Main>
    </Shell>
  );
}
